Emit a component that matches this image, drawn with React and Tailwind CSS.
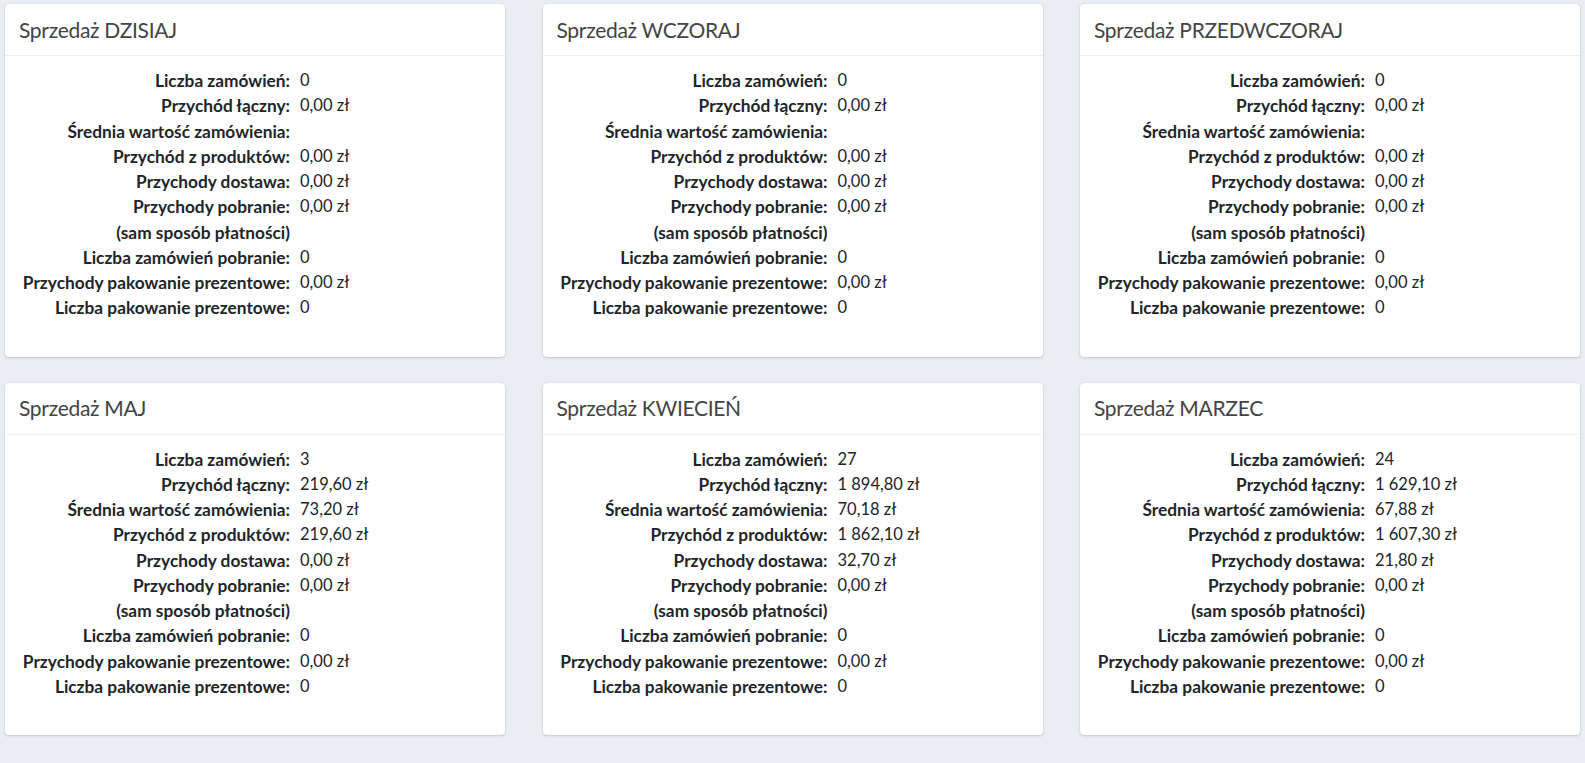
import React from 'react';

const cards = [
  { title: 'DZISIAJ', count: '0', total: '0,00 zł', avg: '', products: '0,00 zł', shipping: '0,00 zł' },
  { title: 'WCZORAJ', count: '0', total: '0,00 zł', avg: '', products: '0,00 zł', shipping: '0,00 zł' },
  { title: 'PRZEDWCZORAJ', count: '0', total: '0,00 zł', avg: '', products: '0,00 zł', shipping: '0,00 zł' },
  { title: 'MAJ', count: '3', total: '219,60 zł', avg: '73,20 zł', products: '219,60 zł', shipping: '0,00 zł' },
  { title: 'KWIECIEŃ', count: '27', total: '1 894,80 zł', avg: '70,18 zł', products: '1 862,10 zł', shipping: '32,70 zł' },
  { title: 'MARZEC', count: '24', total: '1 629,10 zł', avg: '67,88 zł', products: '1 607,30 zł', shipping: '21,80 zł' },
];

const SalesCard = ({ card }) => {
  const rows = [
    ['Liczba zamówień:', card.count],
    ['Przychód łączny:', card.total],
    ['Średnia wartość zamówienia:', card.avg],
    ['Przychód z produktów:', card.products],
    ['Przychody dostawa:', card.shipping],
    ['Przychody pobranie:', '0,00 zł'],
    ['(sam sposób płatności)', ''],
    ['Liczba zamówień pobranie:', '0'],
    ['Przychody pakowanie prezentowe:', '0,00 zł'],
    ['Liczba pakowanie prezentowe:', '0'],
  ];

  return (
    <div className="bg-white rounded-[4px] shadow-[0_0_1px_rgba(0,0,0,0.13),0_1px_3px_rgba(0,0,0,0.15)]">
      {/* Header */}
      <div className="h-[52px] border-b border-[#eef0f2] pl-[14px] flex items-center">
        <h3 className="text-[21px] text-[#444] font-normal tracking-[-0.3px]">Sprzedaż {card.title}</h3>
      </div>

      {/* Body */}
      <dl className="pt-[12px] pb-[36px] text-[#212529]">
        {rows.map(([label, value], i) => (
          <div key={i} className="flex h-[25.25px] leading-[25.25px] overflow-hidden">
            <dt className="w-[285px] shrink-0 text-right font-bold text-[17.3px] leading-[25.25px]">{label}</dt>
            <dd className="pl-[10px] text-[16.5px] leading-[25.25px]">{value}</dd>
          </div>
        ))}
      </dl>
    </div>
  );
};

export default function App() {
  return (
    <div className="min-h-screen bg-[#eaedf1] font-['Lato','Liberation_Sans',sans-serif] pt-[4px] px-[5px] pb-[20px]">
      <div className="grid grid-cols-3 gap-x-[37.5px] gap-y-[26px]">
        {cards.map((card) => (
          <SalesCard key={card.title} card={card} />
        ))}
      </div>
    </div>
  );
}
